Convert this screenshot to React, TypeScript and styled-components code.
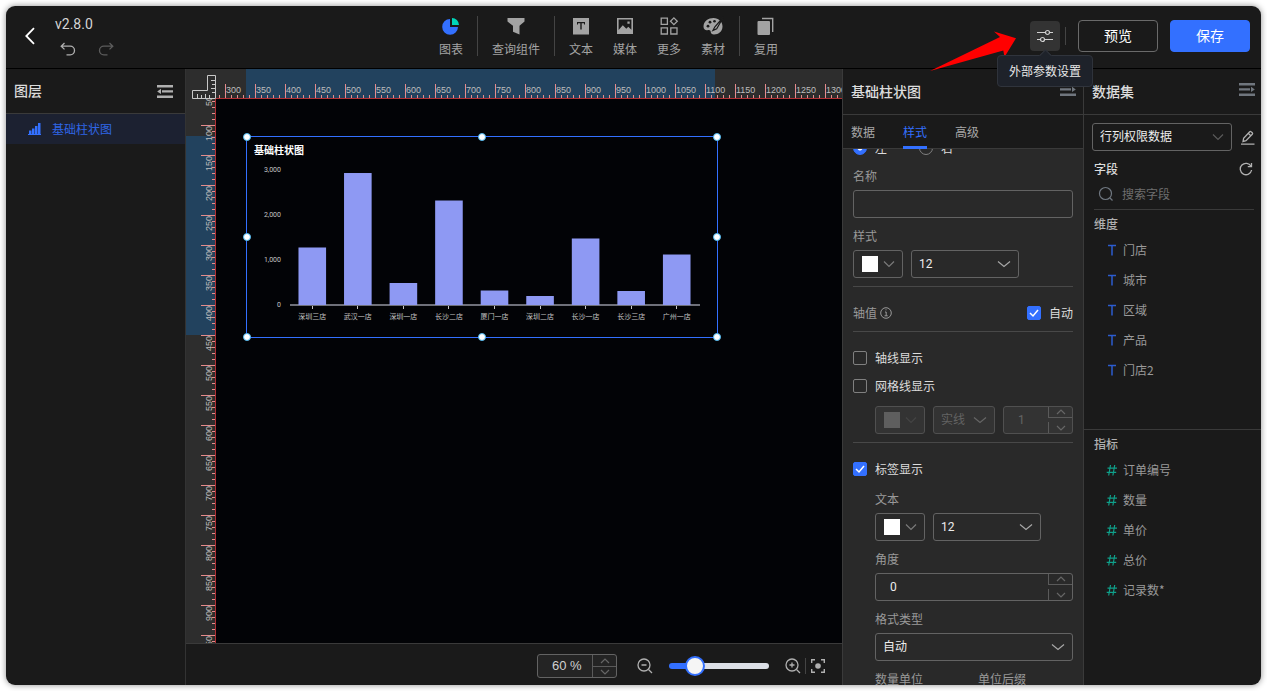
import React, { useLayoutEffect, useRef, useState } from "react";
import styled, { createGlobalStyle, css } from "styled-components";

const color = {
  bg: "#1a1a1a",
  panel: "#292929",
  line: "#3a3a3a",
  border: "#636363",
  text: "#dcdcdc",
  muted: "#999999",
  primary: "#3370ff",
  teal: "#0fa08a",
};

const GlobalStyle = createGlobalStyle`
  * { box-sizing: border-box; }
  body {
    margin: 0;
    background: #fff;
    color: ${color.text};
    font: 12px/20px "Noto Sans CJK SC", Roboto, sans-serif;
    overflow: hidden;
  }
  button, input, select { font: inherit; color: inherit; }
  button { padding: 0; border: 0; background: none; cursor: pointer; }
  svg { display: block; flex: none; }
  h2, h3, p, ul { margin: 0; padding: 0; }
`;

/* ---------- shell ---------- */

const Frame = styled.div`
  height: 100vh;
  padding: 6px;
`;

const Window = styled.div`
  display: flex;
  flex-direction: column;
  height: 100%;
  border-radius: 9px;
  overflow: hidden;
  background: ${color.bg};
  box-shadow: 0 0 6px rgba(0, 0, 0, 0.45);
`;

const Header = styled.header`
  display: flex;
  align-items: center;
  flex: none;
  height: 63px;
  padding-bottom: 2px;
  border-bottom: 1px solid #000;
`;

const Brand = styled.div`
  display: flex;
  align-items: center;
  gap: 20px;
  width: 181px;
  padding-left: 18px;
`;

const BrandInfo = styled.div`
  display: flex;
  flex-direction: column;
  gap: 8px;
  padding-bottom: 2px;
`;

const Version = styled.span`
  font-family: Roboto, sans-serif;
  font-size: 14px;
  line-height: 20px;
  color: #d4d4d4;
`;

const History = styled.div`
  display: flex;
  gap: 22px;
  padding-left: 5px;
`;

const IconButton = styled.button<{ $tone?: string }>`
  display: flex;
  align-items: center;
  justify-content: center;
  color: ${(p) => p.$tone ?? "#b0b0b0"};
`;

const FoldButton = styled(IconButton)`
  padding-bottom: 4px;
`;

const Toolbar = styled.nav`
  display: flex;
  flex: 1;
  align-items: center;
  justify-content: center;
`;

const ToolGroup = styled.div`
  display: flex;
  gap: 20px;
  padding: 0 14px;
`;

const Tool = styled.button`
  display: flex;
  flex-direction: column;
  align-items: center;
  gap: 4px;
  padding-top: 4px;
  color: #a3a3a3;
`;

const Divider = styled.span<{ $h: number }>`
  width: 1px;
  height: ${(p) => p.$h}px;
  background: #444;
`;

const Actions = styled.div`
  display: flex;
  align-items: center;
  padding-right: 11px;
`;

const ParamWrap = styled.div`
  position: relative;
  margin-right: 5px;
`;

const ParamButton = styled(IconButton)`
  width: 30px;
  height: 30px;
  border-radius: 4px;
  background: #333;
`;

const Tooltip = styled.div`
  position: absolute;
  z-index: 5;
  top: 34px;
  left: 50%;
  transform: translateX(-50%);
  padding: 5px 11px;
  border: 1px solid #30343c;
  border-radius: 4px;
  background: #1e222a;
  color: #e8e8e8;
  white-space: nowrap;

  &::before {
    content: "";
    position: absolute;
    top: -5px;
    left: calc(50% - 4px);
    width: 8px;
    height: 8px;
    border: solid #30343c;
    border-width: 1px 0 0 1px;
    background: #1e222a;
    transform: rotate(45deg);
  }
`;

const Pointer = styled.svg`
  position: absolute;
  z-index: 4;
  top: 9px;
  right: calc(100% + 13px);
`;

const HeaderButton = styled.button<{ $primary?: boolean }>`
  width: 80px;
  height: 32px;
  margin-left: 12px;
  border: 1px solid ${(p) => (p.$primary ? color.primary : "#6a6a6a")};
  border-radius: 4px;
  background: ${(p) => (p.$primary ? color.primary : "transparent")};
  color: #fff;
  font-family: Roboto, "Noto Sans CJK SC", sans-serif;
  font-size: 14px;
`;

const Body = styled.div`
  display: flex;
  flex: 1;
  min-height: 0;
`;

const PanelHead = styled.div<{ $h?: number; $pad?: string }>`
  display: flex;
  align-items: center;
  justify-content: space-between;
  flex: none;
  height: ${(p) => p.$h ?? 46}px;
  padding: ${(p) => p.$pad ?? "0 6px 0 8px"};
  border-bottom: 1px solid ${color.line};
`;

const PanelTitle = styled.h2`
  font-family: Roboto, "Noto Sans CJK SC", sans-serif;
  font-size: 14px;
  font-weight: 500;
  color: ${color.text};
`;

/* ---------- layers ---------- */

const Layers = styled.aside`
  width: 180px;
  flex: none;
  border-right: 1px solid #333;
`;

const LayerItem = styled.button`
  display: flex;
  align-items: center;
  gap: 11px;
  width: 100%;
  height: 30px;
  padding-left: 22px;
  background: #1c2131;
  color: #2f66e6;
`;

/* ---------- stage ---------- */

const Stage = styled.main`
  display: flex;
  flex-direction: column;
  flex: 1;
  min-width: 0;
`;

const StageGrid = styled.div`
  display: grid;
  grid-template: 30px 1fr / 30px 1fr;
  flex: 1;
  min-height: 0;
`;

const RulerBox = styled.div`
  min-width: 0;
  min-height: 0;
  overflow: hidden;
  background: #2d2d2d;
`;

const Canvas = styled.div`
  position: relative;
  overflow: hidden;
  background: #020306;
`;

const Selection = styled.section`
  position: absolute;
  top: 37px;
  left: 30px;
  width: 472px;
  height: 202px;
  border: 1px solid ${color.primary};
`;

const Handle = styled.i<{ $x: string; $y: string }>`
  position: absolute;
  left: ${(p) => p.$x};
  top: ${(p) => p.$y};
  width: 8px;
  height: 8px;
  margin: -4px;
  border: 1px solid #4db8f0;
  border-radius: 50%;
  background: #fff;
`;

const StageFoot = styled.div`
  display: flex;
  align-items: center;
  justify-content: flex-end;
  flex: none;
  height: 42px;
  padding: 3px 17px 0 0;
  border-top: 1px solid ${color.line};
`;

const ZoomOut = styled(IconButton)`
  margin-left: 20px;
`;

const FootDivider = styled(Divider)`
  margin: 0 5px 0 4px;
`;

const Slider = styled.input`
  appearance: none;
  width: 100px;
  height: 20px;
  margin: 0 16px;
  background: none;

  &::-webkit-slider-runnable-track {
    height: 6px;
    border-radius: 3px;
    background: linear-gradient(to right, ${color.primary} 26%, #dcdfe6 26%);
  }
  &::-webkit-slider-thumb {
    appearance: none;
    width: 20px;
    height: 20px;
    margin-top: -7px;
    border: 2px solid ${color.primary};
    border-radius: 50%;
    background: #f5f5f5;
  }
`;

/* ---------- form parts ---------- */

const controlBox = css<{ $w?: number; $disabled?: boolean }>`
  width: ${(p) => (p.$w ? `${p.$w}px` : "100%")};
  height: 28px;
  border: 1px solid ${(p) => (p.$disabled ? "#505050" : color.border)};
  border-radius: 3px;
  background: ${(p) => (p.$disabled ? "#333" : "transparent")};
  color: ${(p) => (p.$disabled ? "#636363" : "#ededed")};
  font-family: Roboto, "Noto Sans CJK SC", sans-serif;
`;

const TextInput = styled.input`
  ${controlBox}
  display: block;
  padding: 0 8px;
`;

const SelectBox = styled.div<{ $w?: number; $disabled?: boolean; $tone?: string }>`
  ${controlBox}
  display: grid;
  align-items: center;
  flex: none;

  select, svg { grid-area: 1 / 1; }
  select {
    appearance: none;
    width: 100%;
    height: 100%;
    padding: 0 24px 0 7px;
    border: 0;
    outline: 0;
    background: transparent;
    opacity: 1;
  }
  option { color: #000; }
  svg {
    justify-self: end;
    margin-right: 7px;
    color: ${(p) => p.$tone ?? (p.$disabled ? "#666" : "#a8a8a8")};
    pointer-events: none;
  }
`;

const ColorButton = styled.button<{ $w?: number; $disabled?: boolean }>`
  ${controlBox}
  display: flex;
  align-items: center;
  justify-content: space-between;
  flex: none;
  padding: 0 7px 0 8px;

  svg { color: ${(p) => (p.$disabled ? "#444" : "#7a7a7a")}; }
`;

const Swatch = styled.span<{ $c: string }>`
  width: 16px;
  height: 16px;
  background: ${(p) => p.$c};
`;

const NumberBox = styled.div<{ $w?: number; $disabled?: boolean; $compact?: boolean }>`
  ${controlBox}
  display: flex;
  flex: none;
  ${(p) => p.$compact && css`
    height: 24px;
    background: #242424;
    color: #d0d0d0;
    font-family: "Liberation Sans", sans-serif;
    font-size: 13px;
  `}

  input {
    flex: 1;
    min-width: 0;
    padding: 0 0 0 14px;
    border: 0;
    outline: 0;
    background: transparent;
    opacity: 1;
  }
`;

const Spinner = styled.div<{ $compact?: boolean }>`
  display: flex;
  flex-direction: column;
  width: 24px;
  color: #666;

  button {
    display: flex;
    align-items: center;
    justify-content: center;
    flex: 1;
    border-left: 1px solid #5a5a5a;
    color: inherit;
  }
  button:first-child { border-bottom: 1px solid #5a5a5a; flex: none; height: ${(p) => (p.$compact ? 12 : 11)}px; }
  button:last-child { margin-top: ${(p) => (p.$compact ? 0 : 4)}px; }
`;

const Check = styled.label`
  display: flex;
  align-items: center;
  gap: 8px;
  height: 20px;

  input {
    appearance: none;
    width: 14px;
    height: 14px;
    margin: 0;
    border: 1px solid #808080;
    border-radius: 2px;
  }
  input[type="radio"] { border-radius: 50%; }
  input:checked {
    border-color: ${color.primary};
    background: ${color.primary} center / 10px 10px no-repeat
      url("data:image/svg+xml,%3Csvg xmlns='http://www.w3.org/2000/svg' viewBox='0 0 10 10'%3E%3Cpath d='M1 5l3 3 5-6' fill='none' stroke='white' stroke-width='1.5'/%3E%3C/svg%3E");
  }
  input[type="radio"]:checked { background: radial-gradient(#fff 2px, ${color.primary} 3px); }
`;

/* ---------- style panel ---------- */

const StylePanel = styled.aside`
  display: flex;
  flex-direction: column;
  flex: none;
  width: 242px;
  border: solid ${color.line};
  border-width: 0 1px;
`;

const Tabs = styled.div`
  display: flex;
  flex: none;
  gap: 28px;
  height: 34px;
  padding: 0 8px;
  border-bottom: 1px solid ${color.line};
`;

const Tab = styled.button<{ $active?: boolean }>`
  height: 34px;
  border-bottom: 3px solid ${(p) => (p.$active ? color.primary : "transparent")};
  padding-top: 2px;
  color: ${(p) => (p.$active ? color.primary : "#a8a8a8")};
`;

const Scroll = styled.div`
  flex: 1;
  min-height: 0;
  overflow: hidden;
  padding: 0 10px;
  background: ${color.panel};
`;

const RadioRow = styled.div`
  display: flex;
  gap: 32px;
  margin: -11px 0 8px;
`;

const Section = styled.section`
  padding-bottom: 8px;
  & + & {
    padding-top: 16px;
    border-top: 1px solid #484848;
  }
`;

const Stack = styled.div<{ $gap: number }>`
  display: flex;
  flex-direction: column;
  gap: ${(p) => p.$gap}px;
`;

const Indent = styled.div`
  margin-top: 10px;
  padding-left: 22px;
`;

const Row = styled.div<{ $between?: boolean }>`
  display: flex;
  align-items: center;
  gap: 8px;
  justify-content: ${(p) => (p.$between ? "space-between" : "flex-start")};
`;

const FieldBox = styled.div`
  flex: 1;
  & > label { display: block; height: 20px; margin-bottom: 4px; color: ${color.muted}; }
`;

const Caption = styled.span`
  display: flex;
  align-items: center;
  gap: 3px;
  color: ${color.muted};
`;

/* ---------- dataset panel ---------- */

const Dataset = styled.aside`
  display: flex;
  flex-direction: column;
  flex: none;
  width: 177px;
`;

const FieldAreas = styled.div`
  display: grid;
  grid-template-rows: 21fr 17fr;
  flex: 1;
  min-height: 0;
`;

const Upper = styled.div`
  padding-top: 8px;
  border-bottom: 1px solid ${color.line};
  overflow: hidden;
`;

const Lower = styled.div`
  padding-top: 4px;
  overflow: hidden;
`;

const Source = styled.div`
  display: flex;
  align-items: center;
  gap: 8px;
  padding: 0 6px 0 8px;
`;

const FieldsHead = styled.div`
  display: flex;
  align-items: center;
  justify-content: space-between;
  padding: 0 8px 0 10px;
  margin-top: 8px;
`;

const Search = styled.label`
  display: flex;
  align-items: center;
  gap: 8px;
  height: 31px;
  margin: 0 7px 4px 10px;
  padding-left: 4px;
  border-bottom: 1px solid ${color.line};
  color: #6f7780;

  input {
    width: 100%;
    min-width: 0;
    padding: 0;
    border: 0;
    outline: 0;
    background: none;
  }
  input::placeholder { color: #6e6e6e; }
`;

const GroupTitle = styled.h3<{ $strong?: boolean }>`
  font-size: 12px;
  font-weight: 500;
  color: ${(p) => (p.$strong ? color.text : "#b0b0b0")};
`;

const FieldList = styled.ul`
  list-style: none;
  padding-top: 1px;
`;

const FieldItem = styled.li`
  display: flex;
  align-items: center;
  gap: 6px;
  height: 30px;
  padding-left: 22px;
  color: ${color.muted};
`;

const Titled = styled.div`
  & > h3 { padding-left: 10px; }
`;

/* ---------- icons ---------- */

const Chevron = ({ w = 12, up }: { w?: number; up?: boolean }) => (
  <svg width={w} height="8" viewBox={`0 0 ${w} 8`} fill="none" stroke="currentColor" strokeWidth="1.2">
    <path d={up ? `M1 6L${w / 2} 2L${w - 1} 6` : w < 11 ? `M1 2L${w / 2} 6L${w - 1} 2` : `M1 1.500L${w / 2} 6.500L${w - 1} 1.500`} />
  </svg>
);

const FoldIcon = ({ right }: { right?: boolean }) => (
  <svg width="16" height="13" viewBox="0 0 16 13" fill="currentColor">
    <path d="M0 0h16v2.500H0zM0 10.500h16V13H0z" />
    {right ? <path d="M0 5.200h11v2.300H0zM12 3.800l3.800 2.600L12 9z" /> : <path d="M5 5.200h11v2.300H5zM4 3.800L.2 6.400 4 9z" />}
  </svg>
);

const HistoryIcon = ({ redo }: { redo?: boolean }) => (
  <svg width="16" height="14" viewBox="0 0 16 14" fill="none" stroke="currentColor" strokeWidth="1.300">
    <g transform={redo ? "translate(16 0) scale(-1 1)" : undefined}>
      <path d="M4.500 1L1.200 4.200l3.300 3.200M1.500 4.200h8.700a4.200 4.200 0 0 1 0 8.600H6.500" />
    </g>
  </svg>
);

const toolIcons: Record<string, React.ReactNode> = {
  chart: (
    <>
      <path d="M8 2a7.900 7.900 0 1 0 8 8H8z" fill="#3370ff" />
      <path d="M10 1a7.200 7.200 0 0 1 7 7h-7z" fill="#00d6b9" />
    </>
  ),
  filter: <path d="M.500 1h17v3.500l-5 4.200V17.500l-6.500-2.800V8.700L.500 4.500z" />,
  text: <path fillRule="evenodd" d="M1 1h16v16.500H1zM5 5v2.500h1V6.300h2.300v6.200h1.400V6.300H12v1.200h1V5z" />,
  media: <path fillRule="evenodd" d="M1 1h16v16H1zM2.600 2.600v10.300l4.200-4.700 3.500 3.600 2-2 3.100 3V2.600zM11.400 4.500h2.300v2.300h-2.300z" />,
  more: (
    <g fill="none" stroke="currentColor" strokeWidth="1.300">
      <path d="M1.200 1.200h6.200v6.200H1.200zM1.200 10.800h6.200v6.200H1.200zM10.800 10.800H17v6.200h-6.200zM13.900.900l3.400 3.400-3.400 3.400-3.400-3.400z" />
    </g>
  ),
  material: (
    <>
      <path d="M9.500 1C4.400 1-.500 4.400-.500 9.600c0 3.200 2.400 4 4.600 3.400 1.600-.400 2.600.300 2.600 1.800 0 1.600 1.200 2.700 3.300 2.700 4.700 0 8.500-3.200 8.500-8 0-4.900-3.800-8.500-9-8.500z" />
      <g fill="#1a1a1a">
        <circle cx="4" cy="9.200" r="1.400" />
        <circle cx="6" cy="5.200" r="1.400" />
        <circle cx="10.500" cy="4.200" r="1.300" />
      </g>
      <path d="M19.500 0l-8.600 9.800-2 3.600 3.800-1.600z" stroke="#1a1a1a" strokeWidth="1.200" />
    </>
  ),
  reuse: (
    <>
      <rect x=".500" y="4" width="12.500" height="14" rx="1" />
      <path d="M5 1.500h10.700V15" fill="none" stroke="currentColor" strokeWidth="1.400" />
    </>
  ),
};

const ToolIcon = ({ name }: { name: string }) => (
  <svg width="18" height="18" viewBox="0 0 18 18" fill="currentColor" overflow="visible">
    {toolIcons[name]}
  </svg>
);

const Zoomer = ({ plus }: { plus?: boolean }) => (
  <svg width="16" height="16" viewBox="0 0 16 16" fill="none" stroke="currentColor" strokeWidth="1.300">
    <circle cx="7" cy="7" r="6" />
    <path d={`M11.500 11.500L15 15M4.500 7h5${plus ? "M7 4.500v5" : ""}`} />
  </svg>
);

/* ---------- drawings ---------- */

const UNIT = 0.6;
const tick = "#e58c8c";
const redLine = "#b03034";
const rulerText = { fontSize: 9, fontFamily: "Liberation Sans", fill: "#bdbdbd" };

function Ruler({ vertical }: { vertical?: boolean }) {
  const ref = useRef<SVGSVGElement>(null);
  const [length, setLength] = useState(600);
  useLayoutEffect(() => {
    const el = ref.current!;
    const measure = () => {
      const box = el.getBoundingClientRect();
      setLength(vertical ? box.height : box.width);
    };
    measure();
    const observer = new ResizeObserver(measure);
    observer.observe(el);
    return () => observer.disconnect();
  }, [vertical]);

  const origin = vertical ? 57 : 285;
  const first = vertical ? 50 : 290;
  const last = origin + length / UNIT;
  const marks: number[] = [];
  for (let v = first; v < last; v += 10) marks.push(v);
  const [start, end] = vertical ? [37, 236] : [30, 499];

  return (
    <svg ref={ref} width="100%" height="100%">
      {vertical ? (
        <rect x="0" y={start} width="30" height={end - start} fill="#22425e" />
      ) : (
        <rect x={start} y="0" width={end - start} height="30" fill="#22425e" />
      )}
      {marks.map((v) => {
        const at = Math.round((v - origin) * UNIT);
        const major = v % 50 === 0;
        const size = major ? 14 : 3;
        return vertical ? (
          <React.Fragment key={v}>
            <rect x={29 - size} y={at} width={size} height="1" fill={tick} />
            {major && (
              <text transform={`translate(26 ${at + 1}) rotate(-90)`} textAnchor="end" {...rulerText}>{v}</text>
            )}
          </React.Fragment>
        ) : (
          <React.Fragment key={v}>
            <rect x={at} y={29 - size} width="1" height={size} fill={tick} />
            {major && <text x={at + 1} y="24" {...rulerText}>{v}</text>}
          </React.Fragment>
        );
      })}
      {vertical ? <rect x="29" width="1" height="100%" fill={redLine} /> : <rect y="29" width="100%" height="1" fill={redLine} />}
    </svg>
  );
}

const Corner = () => (
  <svg width="30" height="30" fill="none" stroke="#c8c8c8">
    <path d="M21.500 6.500h8v23h-23v-8h15z" />
    <path d="M25 11.500h4M26 15.500h3M25 19.500h4M26 23.500h3M11.500 29v-4M15.500 29v-3M19.500 29v-4M23.500 29v-3" />
  </svg>
);

const sales: [string, number][] = [
  ["深圳三店", 1278],
  ["武汉一店", 2933],
  ["深圳一店", 489],
  ["长沙二店", 2322],
  ["厦门一店", 322],
  ["深圳二店", 200],
  ["长沙一店", 1478],
  ["长沙三店", 311],
  ["广州一店", 1122],
];

function BarChart() {
  const base = 168;
  const perUnit = 0.045;
  const step = 410 / sales.length;
  return (
    <svg width="470" height="200" fontFamily="Roboto, 'Noto Sans CJK SC', sans-serif" fontSize="7" fill="#c4c4c4" role="img" aria-label="基础柱状图">
      <text x="7" y="17" fontSize="10" fontWeight="700" fill="#fff">基础柱状图</text>
      {[3000, 2000, 1000, 0].map((v) => (
        <text key={v} x="34" y={base + 2 - v * perUnit} textAnchor="end">{v.toLocaleString("en-US")}</text>
      ))}
      <rect x="43" y="167" width="410" height="2" fill="#6e7079" />
      {sales.map(([name, v], i) => {
        const cx = 42.5 + step * (i + 0.5);
        return (
          <g key={name}>
            <rect x={cx - 13.8} y={base - v * perUnit} width="27.6" height={v * perUnit} fill="#8e99f3" />
            <rect x={Math.floor(cx)} y="169" width="1" height="3" fill="#c4c4c4" />
            <text x={cx} y="182" textAnchor="middle">{name}</text>
          </g>
        );
      })}
    </svg>
  );
}

/* ---------- composed controls ---------- */

type ControlProps = { value: string; label: string; w?: number; disabled?: boolean; tone?: string; id?: string };

const Select = ({ value, label, w, disabled, tone, id }: ControlProps) => (
  <SelectBox $w={w} $disabled={disabled} $tone={tone}>
    <select id={id} aria-label={label} disabled={disabled} defaultValue={value}>
      <option>{value}</option>
    </select>
    <Chevron w={tone ? 12 : 14} />
  </SelectBox>
);

const ColorPick = ({ disabled }: { disabled?: boolean }) => (
  <ColorButton type="button" $w={50} $disabled={disabled} disabled={disabled} aria-label="颜色">
    <Swatch $c={disabled ? "#5e5e5e" : "#fff"} />
    <Chevron w={12} />
  </ColorButton>
);

const NumberInput = ({ value, label, w, disabled, compact, id }: ControlProps & { compact?: boolean }) => (
  <NumberBox $w={w} $disabled={disabled} $compact={compact}>
    <input id={id} aria-label={label} defaultValue={value} disabled={disabled} />
    <Spinner $compact={compact}>
      <button type="button" aria-label="增加"><Chevron w={10} up /></button>
      <button type="button" aria-label="减少"><Chevron w={10} /></button>
    </Spinner>
  </NumberBox>
);

const tools: [string, string][][] = [
  [["chart", "图表"]],
  [["filter", "查询组件"]],
  [["text", "文本"], ["media", "媒体"], ["more", "更多"], ["material", "素材"]],
  [["reuse", "复用"]],
];

const dimensions = ["门店", "城市", "区域", "产品", "门店2"];
const measures = ["订单编号", "数量", "单价", "总价", "记录数*"];
const handles: [string, string][] = [
  ["0%", "0%"], ["50%", "0%"], ["100%", "0%"],
  ["0%", "50%"], ["100%", "50%"],
  ["0%", "100%"], ["50%", "100%"], ["100%", "100%"],
];

export default function App() {
  return (
    <Frame>
      <GlobalStyle />
      <Window>
        <Header>
          <Brand>
            <IconButton type="button" aria-label="返回" $tone="#fff">
              <svg width="11" height="18" viewBox="0 0 11 18" fill="none" stroke="currentColor" strokeWidth="1.800">
                <path d="M10 1.200L2.300 9l7.700 7.800" />
              </svg>
            </IconButton>
            <BrandInfo>
              <Version>v2.8.0</Version>
              <History>
                <IconButton type="button" aria-label="撤销"><HistoryIcon /></IconButton>
                <IconButton type="button" aria-label="重做" $tone="#5c5c5c"><HistoryIcon redo /></IconButton>
              </History>
            </BrandInfo>
          </Brand>
          <Toolbar>
            {tools.map((group, i) => (
              <React.Fragment key={i}>
                {i > 0 && <Divider $h={40} />}
                <ToolGroup>
                  {group.map(([icon, label]) => (
                    <Tool type="button" key={icon}>
                      <ToolIcon name={icon} />
                      {label}
                    </Tool>
                  ))}
                </ToolGroup>
              </React.Fragment>
            ))}
          </Toolbar>
          <Actions>
            <ParamWrap>
              <ParamButton type="button" aria-label="外部参数设置" $tone="#d0d0d0">
                <svg width="16" height="14" viewBox="0 0 16 14" fill="none" stroke="currentColor" strokeWidth="1.200">
                  <path d="M0 3.500h8.300M12.700 3.500H16M0 10.500h3.300M7.700 10.500H16" />
                  <circle cx="10.500" cy="3.500" r="2" />
                  <circle cx="5.500" cy="10.500" r="2" />
                </svg>
              </ParamButton>
              <Tooltip role="tooltip">外部参数设置</Tooltip>
              <Pointer width="88" height="42" viewBox="0 0 88 42" fill="#f00">
                <path d="M1 41L71 7 65 1.500 87 8.300 75.500 27 74.300 20.500z" />
              </Pointer>
            </ParamWrap>
            <Divider $h={18} />
            <HeaderButton type="button">预览</HeaderButton>
            <HeaderButton type="button" $primary>保存</HeaderButton>
          </Actions>
        </Header>

        <Body>
          <Layers>
            <PanelHead $h={45} $pad="0 12px 0 8px">
              <PanelTitle>图层</PanelTitle>
              <IconButton type="button" aria-label="收起图层"><FoldIcon /></IconButton>
            </PanelHead>
            <LayerItem type="button">
              <svg width="13" height="12" viewBox="0 0 13 12" fill="#3370ff">
                <path d="M1 7.500h2.500V11H1zM4 5.500h2.500V11H4zM7 3h2.500v8H7zM10 0h2.500v11H10zM0 11h13v1H0z" />
              </svg>
              基础柱状图
            </LayerItem>
          </Layers>

          <Stage>
            <StageGrid>
              <RulerBox><Corner /></RulerBox>
              <RulerBox><Ruler /></RulerBox>
              <RulerBox><Ruler vertical /></RulerBox>
              <Canvas>
                <Selection>
                  <BarChart />
                  {handles.map(([x, y]) => <Handle key={x + y} $x={x} $y={y} />)}
                </Selection>
              </Canvas>
            </StageGrid>
            <StageFoot>
              <NumberInput value="60 %" label="缩放比例" w={80} compact />
              <ZoomOut type="button" aria-label="缩小"><Zoomer /></ZoomOut>
              <Slider type="range" min={0} max={100} defaultValue={20} aria-label="缩放" />
              <IconButton type="button" aria-label="放大"><Zoomer plus /></IconButton>
              <FootDivider $h={16} />
              <IconButton type="button" aria-label="适应画布">
                <svg width="14" height="14" viewBox="0 0 14 14" fill="none" stroke="currentColor" strokeWidth="1.400">
                  <path d="M.700 4V.700H4M10 .700h3.300V4M13.300 10v3.300H10M4 13.300H.700V10" />
                  <circle cx="7" cy="7" r="2.800" fill="currentColor" stroke="none" />
                </svg>
              </IconButton>
            </StageFoot>
          </Stage>

          <StylePanel>
            <PanelHead $pad="0 7px 0 8px">
              <PanelTitle>基础柱状图</PanelTitle>
              <FoldButton type="button" aria-label="收起样式" $tone="#70767e"><FoldIcon right /></FoldButton>
            </PanelHead>
            <Tabs>
              <Tab type="button">数据</Tab>
              <Tab type="button" $active>样式</Tab>
              <Tab type="button">高级</Tab>
            </Tabs>
            <Scroll>
              <Section>
                <RadioRow>
                  <Check><input type="radio" name="side" defaultChecked />左</Check>
                  <Check><input type="radio" name="side" />右</Check>
                </RadioRow>
                <Stack $gap={8}>
                  <FieldBox>
                    <label htmlFor="axis-name">名称</label>
                    <TextInput id="axis-name" />
                  </FieldBox>
                  <FieldBox>
                    <label htmlFor="axis-size">样式</label>
                    <Row><ColorPick /><Select id="axis-size" value="12" label="样式" w={108} /></Row>
                  </FieldBox>
                </Stack>
              </Section>
              <Section>
                <Row $between>
                  <Caption>
                    轴值
                    <svg width="12" height="12" viewBox="0 0 12 12" fill="none" stroke="currentColor">
                      <circle cx="6" cy="6" r="5.300" />
                      <path d="M5 5h1.200v3.800M4.500 8.800h3.200M5.500 2.800h1" />
                    </svg>
                  </Caption>
                  <Check><input type="checkbox" defaultChecked />自动</Check>
                </Row>
              </Section>
              <Section>
                <Stack $gap={8}>
                  <Check><input type="checkbox" />轴线显示</Check>
                  <Check><input type="checkbox" />网格线显示</Check>
                </Stack>
                <Indent>
                  <Row>
                    <ColorPick disabled />
                    <Select value="实线" label="线型" w={62} disabled />
                    <NumberInput value="1" label="线宽" w={70} disabled />
                  </Row>
                </Indent>
              </Section>
              <Section>
                <Check><input type="checkbox" defaultChecked />标签显示</Check>
                <Indent>
                  <Stack $gap={8}>
                    <FieldBox>
                      <label htmlFor="label-size">文本</label>
                      <Row><ColorPick /><Select id="label-size" value="12" label="文本" w={108} /></Row>
                    </FieldBox>
                    <FieldBox>
                      <label htmlFor="label-angle">角度</label>
                      <NumberInput id="label-angle" value="0" label="角度" />
                    </FieldBox>
                    <FieldBox>
                      <label htmlFor="label-format">格式类型</label>
                      <Select id="label-format" value="自动" label="格式类型" />
                    </FieldBox>
                    <Row>
                      <FieldBox>
                        <label htmlFor="unit">数量单位</label>
                        <TextInput id="unit" />
                      </FieldBox>
                      <FieldBox>
                        <label htmlFor="suffix">单位后缀</label>
                        <TextInput id="suffix" />
                      </FieldBox>
                    </Row>
                  </Stack>
                </Indent>
              </Section>
            </Scroll>
          </StylePanel>

          <Dataset>
            <PanelHead>
              <PanelTitle>数据集</PanelTitle>
              <FoldButton type="button" aria-label="收起数据集" $tone="#70767e"><FoldIcon right /></FoldButton>
            </PanelHead>
            <FieldAreas>
              <Upper>
                <Source>
                  <Select value="行列权限数据" label="数据集" w={140} tone="#5a5a5a" />
                  <IconButton type="button" aria-label="编辑">
                    <svg width="15" height="15" viewBox="0 0 15 15" fill="none" stroke="currentColor" strokeWidth="1.300">
                      <path d="M1 14.200h13.500M3 11.500l.600-3.200L9.700 1.700a1 1 0 0 1 1.400 0l1.200 1.100a1 1 0 0 1 0 1.400L6 10.700zM8.500 3.500l2.300 2.200" />
                    </svg>
                  </IconButton>
                </Source>
                <FieldsHead>
                  <GroupTitle $strong>字段</GroupTitle>
                  <IconButton type="button" aria-label="刷新">
                    <svg width="14" height="14" viewBox="0 0 14 14" fill="none" stroke="currentColor" strokeWidth="1.300">
                      <path d="M12 4.300A5.700 5.700 0 1 0 12.600 8M12.500 1v3.700H8.800" />
                    </svg>
                  </IconButton>
                </FieldsHead>
                <Search>
                  <svg width="16" height="16" viewBox="0 0 16 16" fill="none" stroke="currentColor" strokeWidth="1.200">
                    <circle cx="7.500" cy="7.500" r="6" />
                    <path d="M12 12l2.500 2.500" />
                  </svg>
                  <input placeholder="搜索字段" aria-label="搜索字段" />
                </Search>
                <Titled>
                  <GroupTitle>维度</GroupTitle>
                  <FieldList>
                    {dimensions.map((name) => (
                      <FieldItem key={name}>
                        <svg width="11" height="12" viewBox="0 0 11 12" fill="none" stroke="#2c5cd0" strokeWidth="1.500">
                          <path d="M2 1.500h8M6 1.500v10" />
                        </svg>
                        {name}
                      </FieldItem>
                    ))}
                  </FieldList>
                </Titled>
              </Upper>
              <Lower>
                <Titled>
                  <GroupTitle>指标</GroupTitle>
                  <FieldList>
                    {measures.map((name) => (
                      <FieldItem key={name}>
                        <svg width="11" height="12" viewBox="0 0 11 12" fill="none" stroke={color.teal} strokeWidth="1.200">
                          <path d="M4.500 1L2.700 11.500M8.700 1L6.900 11.500M1.500 4.200H11M.700 8.300h9.500" />
                        </svg>
                        {name}
                      </FieldItem>
                    ))}
                  </FieldList>
                </Titled>
              </Lower>
            </FieldAreas>
          </Dataset>
        </Body>
      </Window>
    </Frame>
  );
}
